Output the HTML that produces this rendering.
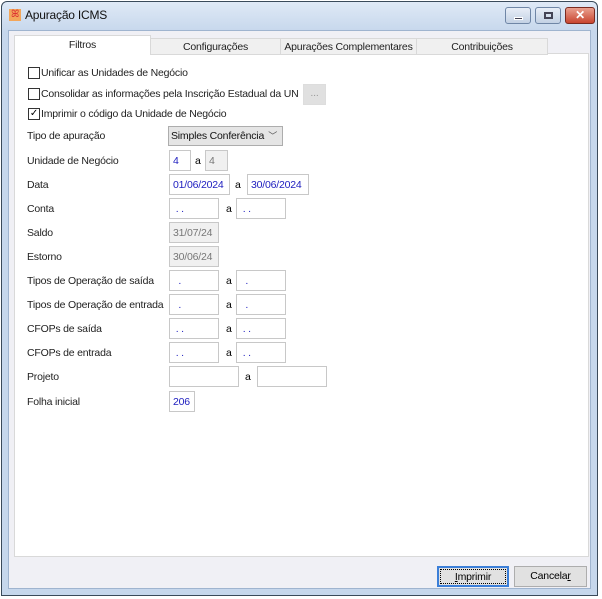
<!DOCTYPE html>
<html><head><meta charset="utf-8"><style>
*{box-sizing:border-box;margin:0;padding:0}
body{width:602px;height:599px;background:#fff;font-family:"Liberation Sans",sans-serif;font-size:10.5px;letter-spacing:-0.2px;color:#000;position:relative;overflow:hidden;white-space:nowrap}
.a{position:absolute}
.win{left:1px;top:1px;width:597px;height:595px;border:1px solid #3a4a5a;border-radius:6px 6px 0 0;background:linear-gradient(#dfe9f6,#c6d7ec 30px,#c6d7ec);}
.client{left:8px;top:30px;width:583px;height:559px;background:#f0f0f5;border:1px solid #9fb4cf}
.panel{left:14px;top:53px;width:575px;height:504px;background:#fff;border:1px solid #d9d9d9}
.tab{top:37px;height:17px;border:1px solid #d9d9d9;background:#f0f0f0;text-align:center;line-height:16px;color:#222}
.lbl{left:27px;color:#222}
.box{height:21px;border:1px solid #c8c8c8;background:#fff;color:#2020c0;padding-left:3px;line-height:21px}
.dis{background:#f0f0f0;color:#777}
.cb{width:12px;height:12px;border:1px solid #333;background:#fff}
.btn{top:566px;height:21px;border:1px solid #adadad;background:#e1e1e1;text-align:center;line-height:19px}
.wb{top:7px;height:17px;border:1px solid #6f86a6;border-radius:3px;background:linear-gradient(#e8eef7,#c3d1e4)}
</style></head><body>
<div class="a win"></div>
<div class="a" style="left:9px;top:9px;width:12px;height:12px;background:#f3a65a;color:#d33;font-size:10px;line-height:12px;text-align:center">ꕤ</div>
<div class="a" style="left:25px;top:8px;font-size:12px;color:#111">Apuração ICMS</div>
<div class="a wb" style="left:505px;width:26px"><div class="a" style="left:8px;top:9px;width:9px;height:3px;background:#445;border:1px solid #fff"></div></div>
<div class="a wb" style="left:535px;width:26px"><div class="a" style="left:8px;top:4px;width:9px;height:7px;border:2px solid #445"></div></div>
<div class="a wb" style="left:565px;width:30px;border-color:#7a2a20;background:linear-gradient(#e9a08f,#c9452f);color:#fff;font-weight:bold;text-align:center;line-height:15px;font-size:12px">✕</div>
<div class="a client"></div>
<div class="a panel"></div>
<div class="a tab" style="left:14px;width:137px;top:35px;height:20px;background:#fff;border-bottom:none;line-height:18px">Filtros</div>
<div class="a tab" style="left:150px;width:131px;top:38px">Configurações</div>
<div class="a tab" style="left:280px;width:137px;top:38px">Apurações Complementares</div>
<div class="a tab" style="left:416px;width:132px;top:38px">Contribuições</div>

<div class="a cb" style="left:28px;top:67px"></div><div class="a" style="left:41px;top:67px;color:#222">Unificar as Unidades de Negócio</div>
<div class="a cb" style="left:28px;top:88px"></div><div class="a" style="left:41px;top:88px;color:#222">Consolidar as informações pela Inscrição Estadual da UN</div>
<div class="a" style="left:303px;top:84px;width:23px;height:21px;background:#e0e0e0;border:1px solid #ddd;color:#999;text-align:center;line-height:17px">...</div>
<div class="a cb" style="left:28px;top:108px;font-size:10px;line-height:10px;text-align:center">✓</div><div class="a" style="left:41px;top:108px;color:#222">Imprimir o código da Unidade de Negócio</div>

<div class="a lbl" style="top:130px">Tipo de apuração</div>
<div class="a" style="left:168px;top:126px;width:115px;height:20px;background:#e5e5e5;border:1px solid #adadad;padding-left:2px;line-height:18px;color:#111">Simples Conferência<span style="position:absolute;right:5px;top:0;font-size:9px;color:#555">﹀</span></div>

<div class="a lbl" style="top:155px">Unidade de Negócio</div>
<div class="a box" style="left:169px;top:150px;width:22px">4</div><div class="a" style="left:195px;top:155px">a</div>
<div class="a box dis" style="left:205px;top:150px;width:23px">4</div>

<div class="a lbl" style="top:179px">Data</div>
<div class="a box" style="left:169px;top:174px;width:61px">01/06/2024</div><div class="a" style="left:235px;top:179px">a</div>
<div class="a box" style="left:247px;top:174px;width:62px">30/06/2024</div>

<div class="a lbl" style="top:203px">Conta</div>
<div class="a box" style="left:169px;top:198px;width:50px">&nbsp;. .</div><div class="a" style="left:226px;top:203px">a</div>
<div class="a box" style="left:236px;top:198px;width:50px">&nbsp;. .</div>

<div class="a lbl" style="top:227px">Saldo</div>
<div class="a box dis" style="left:169px;top:222px;width:50px">31/07/24</div>
<div class="a lbl" style="top:251px">Estorno</div>
<div class="a box dis" style="left:169px;top:246px;width:50px">30/06/24</div>

<div class="a lbl" style="top:275px">Tipos de Operação de saída</div>
<div class="a box" style="left:169px;top:270px;width:50px">&nbsp;&nbsp;.</div><div class="a" style="left:226px;top:275px">a</div>
<div class="a box" style="left:236px;top:270px;width:50px">&nbsp;&nbsp;.</div>
<div class="a lbl" style="top:299px">Tipos de Operação de entrada</div>
<div class="a box" style="left:169px;top:294px;width:50px">&nbsp;&nbsp;.</div><div class="a" style="left:226px;top:299px">a</div>
<div class="a box" style="left:236px;top:294px;width:50px">&nbsp;&nbsp;.</div>
<div class="a lbl" style="top:323px">CFOPs de saída</div>
<div class="a box" style="left:169px;top:318px;width:50px">&nbsp;. .</div><div class="a" style="left:226px;top:323px">a</div>
<div class="a box" style="left:236px;top:318px;width:50px">&nbsp;. .</div>
<div class="a lbl" style="top:347px">CFOPs de entrada</div>
<div class="a box" style="left:169px;top:342px;width:50px">&nbsp;. .</div><div class="a" style="left:226px;top:347px">a</div>
<div class="a box" style="left:236px;top:342px;width:50px">&nbsp;. .</div>
<div class="a lbl" style="top:371px">Projeto</div>
<div class="a box" style="left:169px;top:366px;width:70px"></div><div class="a" style="left:245px;top:371px">a</div>
<div class="a box" style="left:257px;top:366px;width:70px"></div>
<div class="a lbl" style="top:396px">Folha inicial</div>
<div class="a box" style="left:169px;top:391px;width:26px">206</div>

<div class="a btn" style="left:437px;width:72px;border:2px solid #3c7fd8;outline:1px dotted #000;outline-offset:-4px"><u>I</u>mprimir</div>
<div class="a btn" style="left:514px;width:73px">Cancela<u>r</u></div>
</body></html>
